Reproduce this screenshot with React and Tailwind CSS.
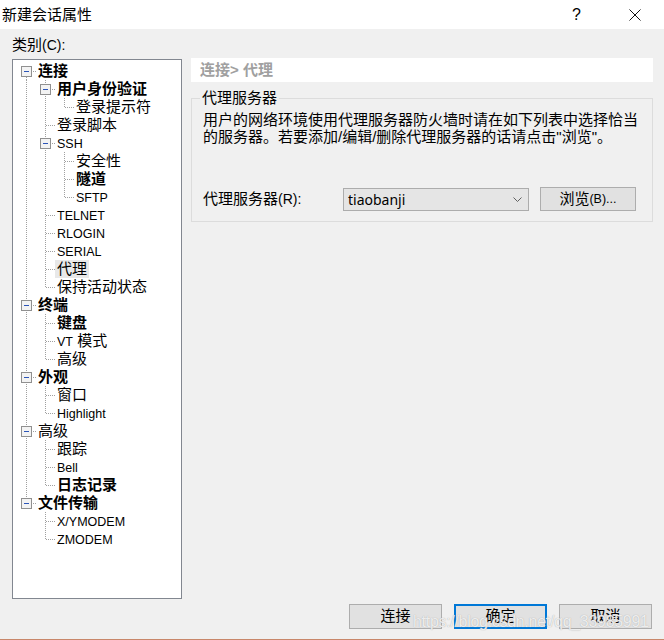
import React from 'react'

const tree = [
  {
    label: '连接', bold: true, children: [
      { label: '用户身份验证', bold: true, children: [{ label: '登录提示符' }] },
      { label: '登录脚本' },
      {
        label: 'SSH', latin: true, children: [
          { label: '安全性' },
          { label: '隧道', bold: true },
          { label: 'SFTP', latin: true },
        ],
      },
      { label: 'TELNET', latin: true },
      { label: 'RLOGIN', latin: true },
      { label: 'SERIAL', latin: true },
      { label: '代理', selected: true },
      { label: '保持活动状态' },
    ],
  },
  {
    label: '终端', bold: true, children: [
      { label: '键盘', bold: true },
      { label: 'VT 模式', mixed: true },
      { label: '高级' },
    ],
  },
  {
    label: '外观', bold: true, children: [
      { label: '窗口' },
      { label: 'Highlight', latin: true },
    ],
  },
  {
    label: '高级', children: [
      { label: '跟踪' },
      { label: 'Bell', latin: true },
      { label: '日志记录', bold: true },
    ],
  },
  {
    label: '文件传输', bold: true, children: [
      { label: 'X/YMODEM', latin: true },
      { label: 'ZMODEM', latin: true },
    ],
  },
]

// flatten tree into rows, keeping which ancestor guides continue
function flatten(nodes, guides = [], out = [], root = true) {
  nodes.forEach((n, i) => {
    const last = i === nodes.length - 1
    out.push({ ...n, guides, last, first: root && i === 0, kids: !!n.children })
    if (n.children) flatten(n.children, [...guides, !last], out, false)
  })
  return out
}

const rows = flatten(tree)
const dot = { stroke: '#a0a0a0', strokeWidth: 1, strokeDasharray: '1 1' }

const Guide = ({ on }) => (
  <svg width="19" height="18" className="shrink-0">
    {on && <line x1="9.5" y1="0" x2="9.5" y2="18" style={dot} />}
  </svg>
)

const Node = ({ first, last, kids }) => (
  <svg width="19" height="18" className="shrink-0">
    <line x1="9.5" y1={first ? 9 : 0} x2="9.5" y2={last ? 9 : 18} style={dot} />
    <line x1="10" y1="9.5" x2="19" y2="9.5" style={dot} />
    {kids && (
      <g>
        <rect x="4.5" y="4.5" width="10" height="10" fill="#f3f3f3" stroke="#909090" />
        <line x1="7" y1="9.5" x2="12" y2="9.5" stroke="#2c55b8" />
      </g>
    )}
  </svg>
)

const Label = ({ row }) => {
  let text
  if (row.mixed) {
    text = (
      <>
        <span className="text-[12.5px]">VT</span> 模式
      </>
    )
  } else if (row.latin) {
    text = <span className="text-[12.5px]">{row.label}</span>
  } else {
    text = row.label
  }
  return (
    <span
      className={
        'px-[2px] leading-[18px] text-[15px] whitespace-nowrap text-black ' +
        (row.bold ? 'font-bold ' : '') +
        (row.selected ? 'bg-[#e8e8e8]' : '')
      }
    >
      {text}
    </span>
  )
}

const Button = ({ children, focus }) => (
  <button
    className={
      'w-[93px] h-[25px] bg-[#e1e1e1] text-[15px] text-black flex items-center justify-center ' +
      (focus ? 'border-2 border-[#0078d7]' : 'border border-[#adadad]')
    }
  >
    {children}
  </button>
)

export default function App() {
  return (
    <div className="relative w-[664px] h-[640px] flex flex-col bg-[#f0f0f0] font-['Liberation_Sans','Noto_Sans_CJK_SC',sans-serif] text-black">

      {/* Title bar */}
      <div className="h-[29px] bg-white flex items-center shrink-0">
        <span className="pl-[2px] text-[15px] leading-none">新建会话属性</span>
        <span className="ml-auto text-[16px] leading-none pr-[48px]">?</span>
        <svg width="12" height="12" className="mr-[23px]">
          <path d="M0.5 0.5 L11.5 11.5 M11.5 0.5 L0.5 11.5" stroke="#111" strokeWidth="1" />
        </svg>
      </div>

      <div className="flex pl-[12px] pr-[11px]">

        {/* Category tree */}
        <div className="w-[170px] pt-[7px]">
          <div className="h-[18px] text-[15px] leading-[18px]">
            类别<span className="text-[14px]">(C):</span>
          </div>
          <div className="mt-[5px] h-[540px] bg-white border border-[#828790] pt-[2px] pl-[4px]">
            {rows.map((r, i) => (
              <div key={i} className="flex h-[18px] items-center">
                {r.guides.map((g, j) => (
                  <Guide key={j} on={g} />
                ))}
                <Node first={r.first} last={r.last} kids={r.kids} />
                <Label row={r} />
              </div>
            ))}
          </div>
        </div>

        {/* Right panel */}
        <div className="flex-1 ml-[9px] pt-[29px]">
          <div className="h-[24px] bg-white pl-[9px] flex items-center text-[15px] font-bold text-[#a0a0a0]">
            连接&gt; 代理
          </div>

          <fieldset className="mt-[7px] border border-[#dcdcdc]">
            <legend className="ml-[8px] px-[2px] text-[15px] leading-[18px]">代理服务器</legend>
            <div className="pl-[11px] pr-[10px] pb-[10px]">
              <p className="mt-[4px] text-[15px] leading-[17px] whitespace-nowrap">
                用户的网络环境使用代理服务器防火墙时请在如下列表中选择恰当
                <br />
                的服务器。若要添加/编辑/删除代理服务器的话请点击"浏览"。
              </p>

              <div className="mt-[42px] flex items-center">
                <span className="w-[140px] text-[15px]">
                  代理服务器<span className="text-[14px]">(R):</span>
                </span>
                <div className="w-[186px] h-[23px] bg-[#e5e5e5] border border-[#acacac] flex items-center pl-[4px] pr-[6px]">
                  <span className="text-[14px] font-['Noto_Sans',sans-serif]">tiaobanji</span>
                  <svg width="9" height="5" className="ml-auto">
                    <path d="M0.5 0.5 L4.5 4.5 L8.5 0.5" fill="none" stroke="#606060" />
                  </svg>
                </div>
                <button className="ml-[11px] w-[96px] h-[24px] bg-[#e1e1e1] border border-[#adadad] text-[15px] flex items-center justify-center">
                  浏览<span className="text-[12.5px]">(B)...</span>
                </button>
              </div>
            </div>
          </fieldset>
        </div>
      </div>

      {/* Buttons */}
      <div className="mt-[5px] flex justify-end gap-[12px] pr-[12px]">
        <Button>连接</Button>
        <Button focus>确定</Button>
        <Button>取消</Button>
      </div>

      <div className="mt-auto h-[1px] bg-[#c8876a]" />

      {/* watermark over the buttons */}
      <span className="absolute left-[413px] top-[610px] text-[16px] tracking-[-0.3px] text-white/80 [text-shadow:0_0_1px_#9a9a9a] pointer-events-none">
        https://blog.csdn.net/qq_33985991
      </span>
    </div>
  )
}
